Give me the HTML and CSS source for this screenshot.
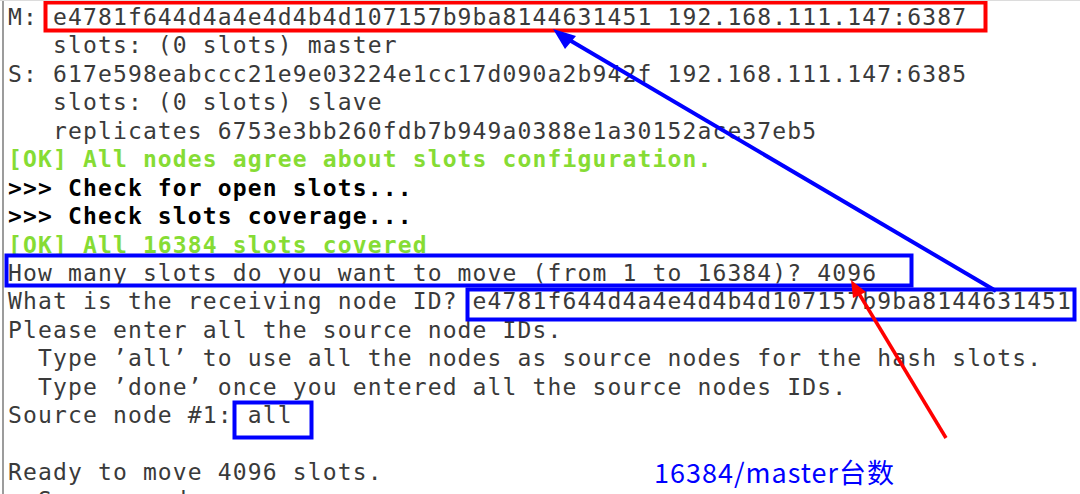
FILE: index.html
```html
<!DOCTYPE html>
<html>
<head>
<meta charset="utf-8">
<link rel="stylesheet" href="styles.css">
</head>
<body>
<div class="page">
  <div class="term">
    <div class="ln">M: e4781f644d4a4e4d4b4d107157b9ba8144631451 192.168.111.147:6387</div>
    <div class="ln">   slots: (0 slots) master</div>
    <div class="ln">S: 617e598eabccc21e9e03224e1cc17d090a2b942f 192.168.111.147:6385</div>
    <div class="ln">   slots: (0 slots) slave</div>
    <div class="ln">   replicates 6753e3bb260fdb7b949a0388e1a30152ace37eb5</div>
    <div class="ln ok">[OK] All nodes agree about slots configuration.</div>
    <div class="ln strong">&gt;&gt;&gt; Check for open slots...</div>
    <div class="ln strong">&gt;&gt;&gt; Check slots coverage...</div>
    <div class="ln ok">[OK] All 16384 slots covered</div>
    <div class="ln">How many slots do you want to move (from 1 to 16384)? 4096</div>
    <div class="ln">What is the receiving node ID? e4781f644d4a4e4d4b4d107157b9ba8144631451</div>
    <div class="ln">Please enter all the source node IDs.</div>
    <div class="ln">  Type ’all’ to use all the nodes as source nodes for the hash slots.</div>
    <div class="ln">  Type ’done’ once you entered all the source nodes IDs.</div>
    <div class="ln">Source node #1: all</div>
    <div class="ln"> </div>
    <div class="ln">Ready to move 4096 slots.</div>
    <div class="ln">  Source nodes:</div>
  </div>

  <svg class="marks" width="1080" height="494" viewBox="0 0 1080 494">
    <rect x="45.5" y="1.5" width="940" height="28" fill="none" stroke="#ff0000" stroke-width="4"/>
    <rect x="6.5" y="254.5" width="905" height="30" fill="none" stroke="#0000ff" stroke-width="4"/>
    <rect x="467.5" y="288.5" width="607" height="30" fill="none" stroke="#0000ff" stroke-width="4"/>
    <rect x="234.5" y="401.5" width="77" height="35" fill="none" stroke="#0000ff" stroke-width="4"/>
    <line x1="996" y1="290" x2="566" y2="37" stroke="#0000ff" stroke-width="4"/>
    <polygon points="553,28 576,35 565,48" fill="#0000ff"/>
    <line x1="946" y1="437" x2="858" y2="291" stroke="#ff0000" stroke-width="3.5"/>
    <polygon points="851,279 866,291 853,297" fill="#ff0000"/>
  </svg>

  <div class="note">16384/master台数</div>
</div>
</body>
</html>
```

FILE: styles.css
```css
html, body {
  margin: 0;
  padding: 0;
  background: #ffffff;
  overflow: hidden;
}

.page {
  position: relative;
  width: 1080px;
  height: 494px;
  overflow: hidden;
  border-top: 1px solid #dcdcdc;
  box-sizing: border-box;
}

.term {
  margin-left: 2px;
  border-left: 2px solid #9c9c9c;
  padding: 2px 0 0 4px;
  height: 100%;
  box-sizing: border-box;
  font-family: "DejaVu Sans Mono", monospace;
  font-size: 23px;
  line-height: 28.45px;
  letter-spacing: 1.14px;
  color: #3a3a3a;
}

.ln {
  white-space: pre;
  height: 28.45px;
}

.ok {
  color: #86dc34;
  font-weight: bold;
}

.strong {
  color: #000000;
  font-weight: bold;
}

.marks {
  position: absolute;
  left: 0;
  top: 0;
}

.note {
  position: absolute;
  left: 654px;
  top: 453px;
  font-family: "Noto Sans CJK SC", "Noto Sans", sans-serif;
  font-size: 27px;
  line-height: 36px;
  letter-spacing: 1px;
  color: #0000ff;
}
```
